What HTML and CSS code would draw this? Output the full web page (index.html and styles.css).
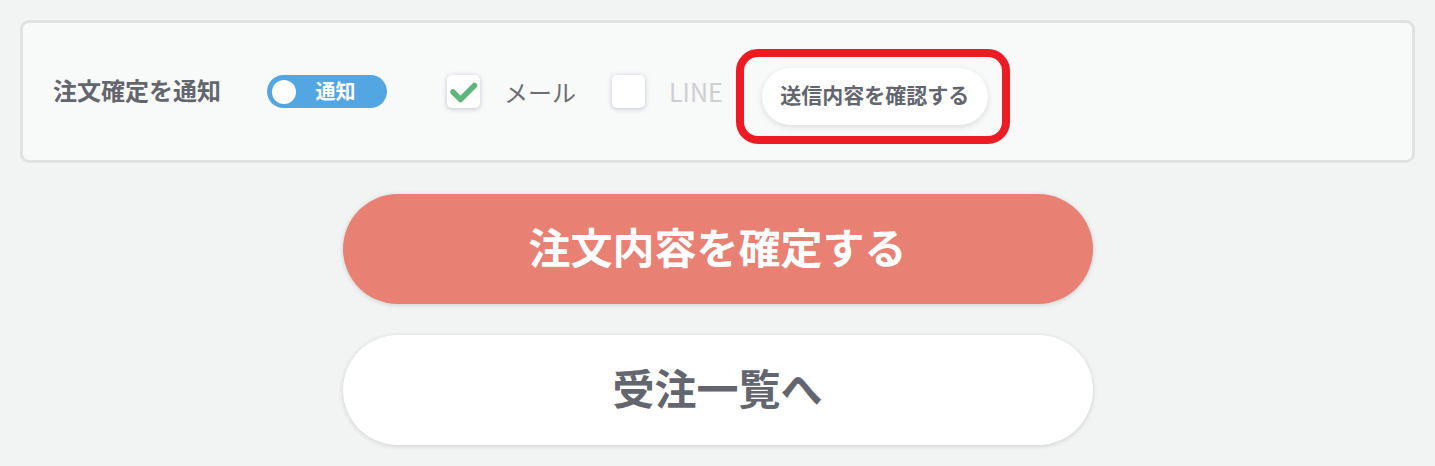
FILE: index.html
```html
<!DOCTYPE html>
<html lang="ja">
<head>
<meta charset="utf-8">
<link rel="stylesheet" href="styles.css">
</head>
<body>
<div class="page">
  <div class="panel">
    <div class="label">注文確定を通知</div>
    <div class="toggle"><span class="knob"></span><span class="toggle-text">通知</span></div>
    <div class="check-group mail">
      <span class="box checked">
        <svg width="33" height="33" viewBox="0 0 33 33"><path d="M6 17 L13.5 24.5 L27.5 10.5" fill="none" stroke="#5db77c" stroke-width="5.5" stroke-linecap="round" stroke-linejoin="round"/></svg>
      </span>
      <span class="check-label">メール</span>
    </div>
    <div class="check-group line">
      <span class="box"></span>
      <span class="check-label disabled">LINE</span>
    </div>
    <div class="highlight">
      <button class="preview-btn">送信内容を確認する</button>
    </div>
  </div>
  <div class="actions">
    <button class="big-btn primary">注文内容を確定する</button>
    <button class="big-btn secondary">受注一覧へ</button>
  </div>
</div>
</body>
</html>
```

FILE: styles.css
```css
* { box-sizing: border-box; }
html, body {
  margin: 0;
  background: #f2f4f4;
  font-family: "Noto Sans CJK JP", "Noto Sans", sans-serif;
  color: #63666e;
}
.page {
  padding: 20px;
}
.panel {
  height: 143px;
  background: #f8f9f9;
  border: 3px solid #dfe2df;
  border-radius: 9px;
  display: flex;
  align-items: center;
  padding-left: 30px;
}
.label {
  font-size: 24px;
  font-weight: 700;
  line-height: 1;
  color: #63666e;
  margin-top: -4px;
}
.toggle {
  margin-left: 46px;
  width: 120px;
  height: 33px;
  border-radius: 17px;
  background: #52a7e2;
  display: flex;
  align-items: center;
  padding-left: 5px;
}
.knob {
  width: 24px;
  height: 24px;
  border-radius: 50%;
  background: #fff;
}
.toggle-text {
  flex: 1;
  text-align: center;
  color: #fff;
  font-weight: 700;
  font-size: 20px;
  line-height: 1;
  padding-right: 12px;
  margin-top: -1px;
}
.check-group {
  display: flex;
  align-items: center;
  gap: 24px;
}
.check-group.mail { margin-left: 60px; }
.check-group.line { margin-left: 36px; }
.box {
  width: 33px;
  height: 33px;
  border-radius: 5px;
  background: #fff;
  box-shadow: 0 1px 5px rgba(90, 95, 130, 0.35);
  display: flex;
}
.check-label {
  font-size: 24px;
  line-height: 1;
  color: #6b6e75;
}
.check-label.disabled {
  color: #cfcfd0;
  font-size: 25px;
}
.highlight {
  margin-left: 13px;
  margin-top: 10px;
  border: 8px solid #ec1b24;
  border-radius: 22px;
  padding: 11px 14px 11px 18px;
}
.preview-btn {
  display: block;
  width: 226px;
  height: 57px;
  border: none;
  border-radius: 29px;
  background: #fff;
  box-shadow: 0 2px 6px rgba(0, 0, 0, 0.12);
  font-family: inherit;
  font-size: 21px;
  font-weight: 700;
  color: #63666e;
  padding: 0 0 6px;
}
.actions {
  display: flex;
  flex-direction: column;
  align-items: center;
  gap: 31px;
  margin-top: 31px;
}
.big-btn {
  width: 750px;
  height: 110px;
  border: none;
  border-radius: 55px;
  font-family: inherit;
  font-size: 42px;
  font-weight: 700;
  padding: 0 0 8px;
  box-shadow: 0 1px 5px rgba(0, 0, 0, 0.15);
}
.primary {
  background: #e88074;
  color: #fff;
}
.secondary {
  background: #fff;
  color: #63666e;
}
```
